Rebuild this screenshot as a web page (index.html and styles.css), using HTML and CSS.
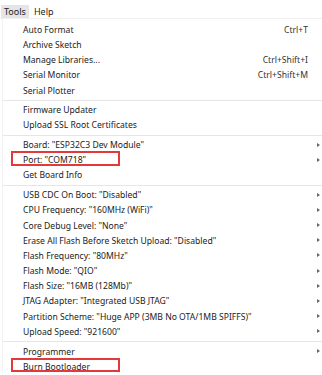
FILE: index.html
```html
<!DOCTYPE html>
<html lang="en">
<head>
    <meta charset="UTF-8">
    <title>Tools menu</title>
    <link rel="stylesheet" href="styles.css">
</head>
<body>
    <div class="menubar">
        <span class="top-item active">Tools</span>
        <span class="top-item">Help</span>
    </div>

    <div class="menu">
        <div class="item"><span class="label">Auto Format</span><span class="key">Ctrl+T</span></div>
        <div class="item"><span class="label">Archive Sketch</span></div>
        <div class="item"><span class="label">Manage Libraries...</span><span class="key">Ctrl+Shift+I</span></div>
        <div class="item"><span class="label">Serial Monitor</span><span class="key">Ctrl+Shift+M</span></div>
        <div class="item"><span class="label">Serial Plotter</span></div>
        <div class="sep"></div>
        <div class="item"><span class="label">Firmware Updater</span></div>
        <div class="item"><span class="label">Upload SSL Root Certificates</span></div>
        <div class="sep"></div>
        <div class="item sub"><span class="label">Board: "ESP32C3 Dev Module"</span></div>
        <div class="item sub"><span class="label">Port: "COM718"</span><span class="mark"></span></div>
        <div class="item"><span class="label">Get Board Info</span></div>
        <div class="sep"></div>
        <div class="item sub"><span class="label">USB CDC On Boot: "Disabled"</span></div>
        <div class="item sub"><span class="label">CPU Frequency: "160MHz (WiFi)"</span></div>
        <div class="item sub"><span class="label">Core Debug Level: "None"</span></div>
        <div class="item sub"><span class="label">Erase All Flash Before Sketch Upload: "Disabled"</span></div>
        <div class="item sub"><span class="label">Flash Frequency: "80MHz"</span></div>
        <div class="item sub"><span class="label">Flash Mode: "QIO"</span></div>
        <div class="item sub"><span class="label">Flash Size: "16MB (128Mb)"</span></div>
        <div class="item sub"><span class="label">JTAG Adapter: "Integrated USB JTAG"</span></div>
        <div class="item sub"><span class="label">Partition Scheme: "Huge APP (3MB No OTA/1MB SPIFFS)"</span></div>
        <div class="item sub"><span class="label">Upload Speed: "921600"</span></div>
        <div class="sep"></div>
        <div class="item sub"><span class="label">Programmer</span></div>
        <div class="item"><span class="label">Burn Bootloader</span><span class="mark"></span></div>
    </div>
</body>
</html>
```

FILE: styles.css
```css
body {
    margin: 0;
    background: #fff;
    font-family: "Noto Sans", "Open Sans", sans-serif;
    font-size: 8.6px;
    color: #222;
    width: 322px;
    height: 375px;
    overflow: hidden;
}

.menubar {
    display: flex;
    height: 13px;
    padding: 5px 0 0 1px;
    border-bottom: 1px solid #f0f0f0;
}

.top-item {
    padding: 0 3px;
    line-height: 13px;
    font-size: 9px;
}

.top-item.active {
    background: #e5e5e5;
    margin-right: 2px;
}

.menu {
    margin-left: 2px;
    border-left: 1px solid #f2f2f2;
    padding-top: 3.2px;
}

.item {
    position: relative;
    display: flex;
    align-items: center;
    height: 15.2px;
    padding-left: 20px;
    padding-right: 14px;
}

.label {
    flex: 1;
    white-space: nowrap;
}

.key {
    color: #333;
}

.sub::after {
    content: "";
    position: absolute;
    right: 2px;
    top: 5px;
    border-left: 3px solid #666;
    border-top: 2.5px solid transparent;
    border-bottom: 2.5px solid transparent;
}

.mark {
    position: absolute;
    left: 8px;
    top: -1.5px;
    width: 105px;
    height: 10.5px;
    border: 2px solid #e3393b;
}

.sep {
    height: 1px;
    background: #e6e6e6;
    margin: 2px 0 1.5px 0;
}
```
